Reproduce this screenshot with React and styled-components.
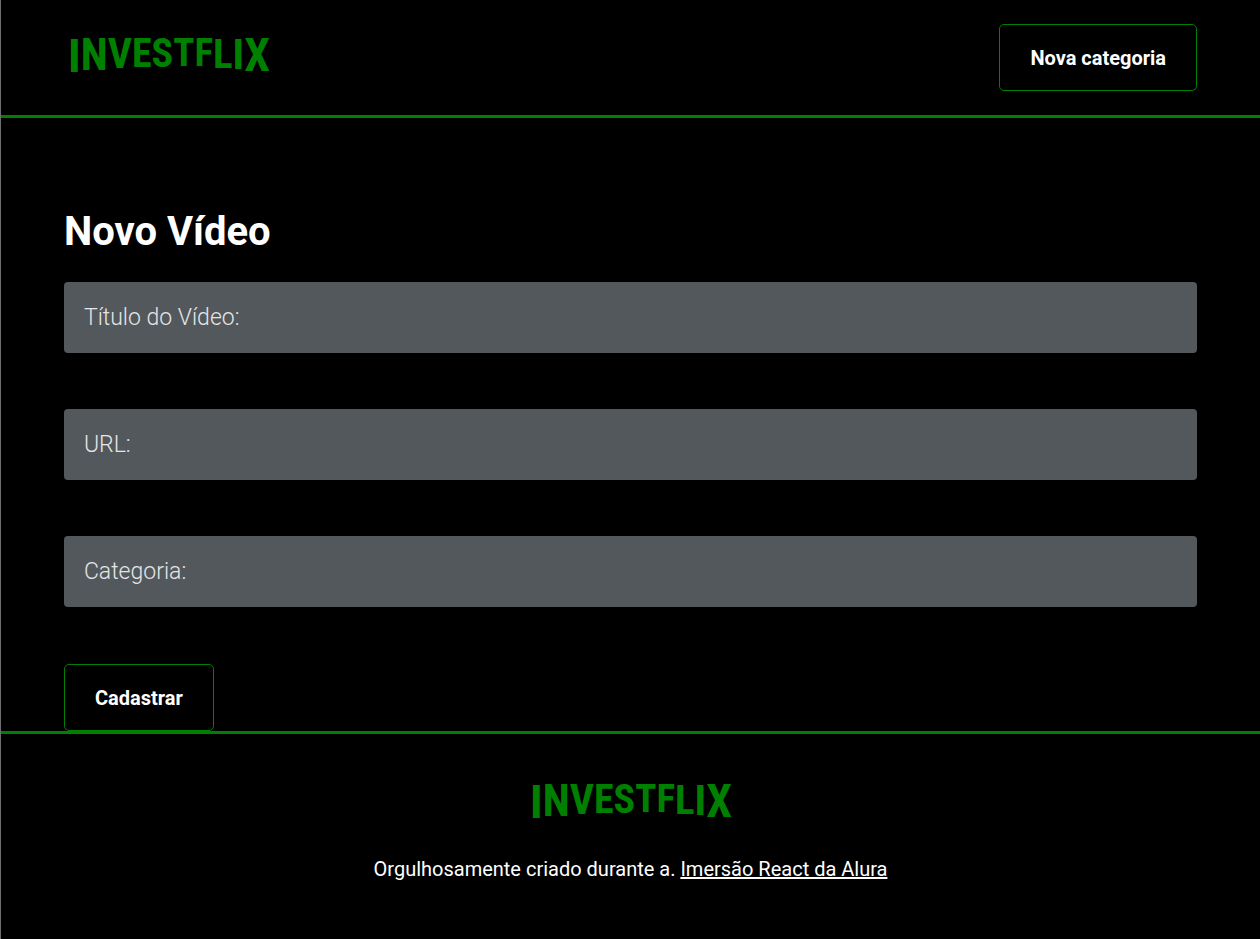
import React from "react";
import styled, { createGlobalStyle } from "styled-components";

const GlobalStyle = createGlobalStyle`
  *, *::before, *::after { box-sizing: border-box; }
  body {
    margin: 0;
    background: #000;
    color: #fff;
    font-family: Roboto, "Liberation Sans", sans-serif;
  }
`;

const Page = styled.div`
  display: flex;
  flex-direction: column;
  min-height: 100vh;
  border-left: 1px solid #6f6f6f;
`;

const Header = styled.header`
  display: flex;
  align-items: center;
  justify-content: space-between;
  padding: 24px 5%;
  border-bottom: 3px solid #008000;
`;

const Main = styled.main`
  flex: 1;
  padding: 90px 5% 0;
`;

const Title = styled.h1`
  margin: 0 0 26px;
  font-size: 40px;
  line-height: 48px;
  font-weight: 700;
`;

const Fields = styled.div`
  display: flex;
  flex-direction: column;
  gap: 56px;
  margin-bottom: 57px;
`;

const Field = styled.div`
  display: flex;
  align-items: center;
  height: 71px;
  padding: 0 20px;
  border-radius: 4px;
  background: #53585d;
`;

const Label = styled.label`
  color: #e5e5e5;
  font-size: 23px;
  line-height: 28px;
  font-weight: 300;
`;

const Input = styled.input`
  flex: 1;
  min-width: 0;
  height: 100%;
  margin-left: 12px;
  padding: 0;
  border: 0;
  outline: 0;
  background: transparent;
  color: #fff;
  font: inherit;
  font-size: 23px;
`;

const Button = styled.button`
  height: 67px;
  padding: 0 30px;
  border: 1px solid #008000;
  border-radius: 5px;
  background: #000;
  color: #fff;
  font-family: inherit;
  font-size: 20px;
  font-weight: 700;
  cursor: pointer;
`;

const Footer = styled.footer`
  display: flex;
  flex-direction: column;
  align-items: center;
  gap: 23px;
  padding: 40px 5% 58px;
  border-top: 3px solid #008000;
`;

const FooterText = styled.p`
  margin: 0;
  font-size: 20px;
  line-height: 24px;
  text-align: center;
`;

const FooterLink = styled.a`
  color: #fff;
`;

const LogoLink = styled.a`
  display: block;
  line-height: 0;
`;

const LogoImage = styled.svg`
  width: 210px;
  height: 60px;
  fill: #008000;
  font-family: "Roboto Condensed", "Liberation Sans Narrow", "Liberation Sans", sans-serif;
  font-weight: 700;
`;

// Each letter of the arched wordmark: outer letters are taller and sit lower.
const letters = [
  ["I", 47, 44],
  ["N", 44, 42],
  ["V", 42, 40],
  ["E", 40, 39],
  ["S", 40, 39],
  ["T", 39, 38],
  ["F", 39, 38],
  ["L", 41, 40],
  ["I", 43, 41],
  ["X", 46, 43],
];

function Logo() {
  return (
    <LogoLink href="#" aria-label="Investflix">
      <LogoImage viewBox="0 0 210 60">
        <text x="105" textAnchor="middle">
          {letters.map(([letter, size, base], i) => (
            <tspan
              key={i}
              fontSize={size}
              dy={i === 0 ? base : base - letters[i - 1][2]}
            >
              {letter}
            </tspan>
          ))}
        </text>
      </LogoImage>
    </LogoLink>
  );
}

const fields = [
  { id: "titulo", label: "Título do Vídeo:" },
  { id: "url", label: "URL:" },
  { id: "categoria", label: "Categoria:" },
];

export default function App() {
  return (
    <>
      <GlobalStyle />
      <Page>
        <Header>
          <Logo />
          <Button type="button">Nova categoria</Button>
        </Header>
        <Main>
          <Title>Novo Vídeo</Title>
          <form onSubmit={(event) => event.preventDefault()}>
            <Fields>
              {fields.map(({ id, label }) => (
                <Field key={id}>
                  <Label htmlFor={id}>{label}</Label>
                  <Input id={id} name={id} type="text" />
                </Field>
              ))}
            </Fields>
            <Button type="submit">Cadastrar</Button>
          </form>
        </Main>
        <Footer>
          <Logo />
          <FooterText>
            Orgulhosamente criado durante a.{" "}
            <FooterLink href="#">Imersão React da Alura</FooterLink>
          </FooterText>
        </Footer>
      </Page>
    </>
  );
}
